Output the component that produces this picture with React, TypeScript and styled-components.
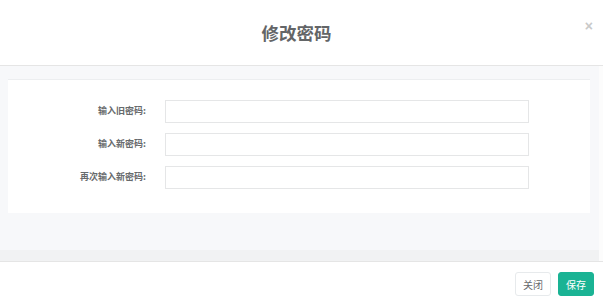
import { Fragment } from "react";
import styled, { createGlobalStyle } from "styled-components";

const Global = createGlobalStyle`
  html, body {
    margin: 0;
    padding: 0;
    background: #ffffff;
    font-family: "Noto Sans CJK SC", "Noto Sans", sans-serif;
  }
`;

const Modal = styled.div`
  width: 603px;
  height: 303px;
  display: flex;
  flex-direction: column;
  background: #ffffff;
`;

const Header = styled.div`
  position: relative;
  height: 65px;
  flex-shrink: 0;
  display: flex;
  align-items: center;
  justify-content: center;
  border-bottom: 1px solid #e5e5e5;
`;

const Title = styled.h4`
  margin: 0 0 0 -10px;
  font-size: 17.5px;
  font-weight: 700;
  color: #636567;
`;

const Close = styled.button`
  position: absolute;
  right: 10px;
  top: 18px;
  border: none;
  background: none;
  padding: 0;
  font-family: "Liberation Sans", sans-serif;
  font-size: 14px;
  font-weight: 700;
  color: #c9c9c9;
  cursor: pointer;
`;

const Body = styled.div`
  height: 195px;
  display: flex;
`;

const Scroller = styled.div`
  flex: 1;
  display: flex;
  flex-direction: column;
  background: #f7f8fa;
`;

const Content = styled.div`
  flex: 1;
  padding: 13px 9px 0 8px;
`;

const HTrack = styled.div`
  height: 11px;
  background: #f1f2f3;
`;

const VTrack = styled.div`
  width: 4px;
  background: #fcfcfc;
`;

const Card = styled.div`
  background: #ffffff;
  border-top: 1px solid #eceef0;
  padding: 20px 0 24px;
  display: grid;
  grid-template-columns: 138px 364px;
  column-gap: 19px;
  row-gap: 10px;
  align-items: center;
`;

const Label = styled.label`
  text-align: right;
  font-size: 9px;
  line-height: 12px;
  font-weight: 700;
  color: #676a6c;
  margin-top: -2px;
`;

const Field = styled.input`
  box-sizing: border-box;
  height: 23px;
  width: 100%;
  border: 1px solid #e5e6e7;
  background: #ffffff;
  outline: none;
`;

const Footer = styled.div`
  flex: 1;
  border-top: 1px solid #e5e5e5;
  display: flex;
  justify-content: flex-end;
  align-items: flex-start;
  gap: 7px;
  padding: 10px 9px 0 0;
`;

const Button = styled.button<{ $primary?: boolean }>`
  width: 36px;
  height: 24px;
  padding: 0;
  border-radius: 3px;
  font-family: "Noto Sans CJK SC", sans-serif;
  font-size: 10px;
  border: 1px solid ${(p) => (p.$primary ? "#1ab394" : "#e7eaec")};
  background: ${(p) => (p.$primary ? "#1ab394" : "#ffffff")};
  color: ${(p) => (p.$primary ? "#ffffff" : "#676a6c")};
  cursor: pointer;
`;

const fields = ["输入旧密码:", "输入新密码:", "再次输入新密码:"];

export default function App() {
  return (
    <>
      <Global />
      <Modal>
        <Header>
          <Title>修改密码</Title>
          <Close>×</Close>
        </Header>
        <Body>
          <Scroller>
            <Content>
              <Card>
                {fields.map((f) => (
                  <Fragment key={f}>
                    <Label>{f}</Label>
                    <Field type="password" />
                  </Fragment>
                ))}
              </Card>
            </Content>
            <HTrack />
          </Scroller>
          <VTrack />
        </Body>
        <Footer>
          <Button>关闭</Button>
          <Button $primary>保存</Button>
        </Footer>
      </Modal>
    </>
  );
}
